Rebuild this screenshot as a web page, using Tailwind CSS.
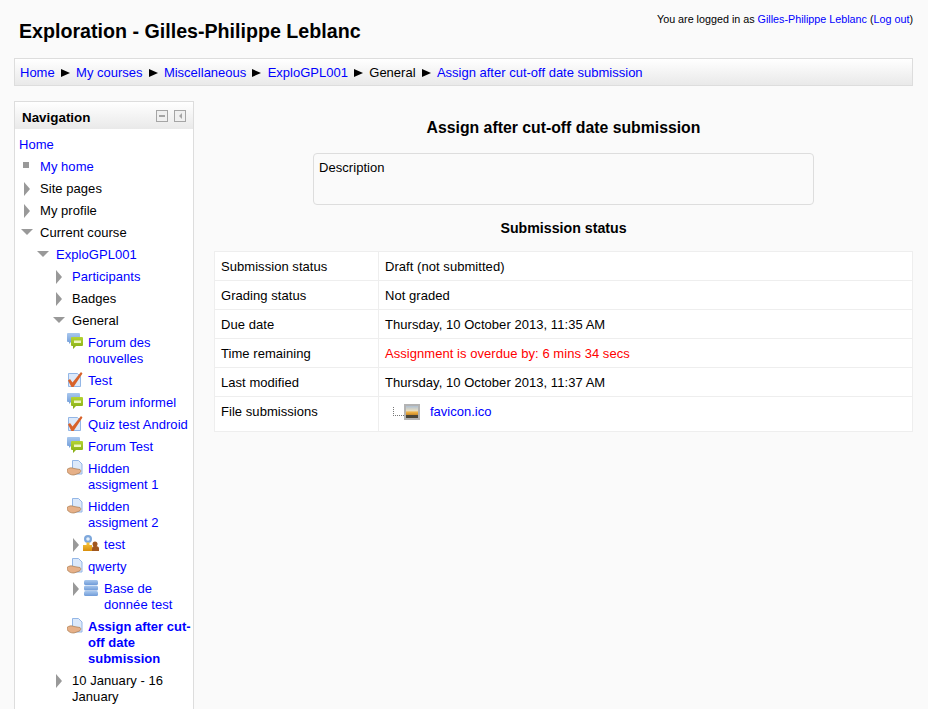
<!DOCTYPE html>
<html lang="en">
<head>
  <meta charset="UTF-8">
  <title>Assign after cut-off date submission</title>
  <script src="https://cdn.jsdelivr.net/npm/@tailwindcss/browser@4"></script>
</head>
<body class="bg-[#fafafa] text-black font-['Liberation_Sans',Arial,sans-serif] text-[13px] leading-[16px] tracking-[0.05px] h-[709px] overflow-hidden">
  <svg class="absolute w-0 h-0">
    <defs>
      <linearGradient id="blue" x1="0" y1="0" x2="0" y2="1"><stop offset="0" stop-color="#a9c8ee"/><stop offset="1" stop-color="#6f9bd8"/></linearGradient>
      <linearGradient id="green" x1="0" y1="0" x2="0" y2="1"><stop offset="0" stop-color="#b5d433"/><stop offset="1" stop-color="#83ab12"/></linearGradient>
      <linearGradient id="gold" x1="0" y1="0" x2="0" y2="1"><stop offset="0" stop-color="#f9c840"/><stop offset="1" stop-color="#d98e0a"/></linearGradient>
      <linearGradient id="sky" x1="0" y1="0" x2="0" y2="1"><stop offset="0" stop-color="#aebfd2"/><stop offset=".5" stop-color="#e6dcc0"/><stop offset=".7" stop-color="#eeb043"/><stop offset="1" stop-color="#c98a2a"/></linearGradient>
    </defs>
    <symbol id="right" viewBox="0 0 8 16"><path d="M1 1l6 7-6 7z" fill="#999"/></symbol>
    <symbol id="down" viewBox="0 0 12 8"><path d="M0 1h12L6 7z" fill="#999"/></symbol>
    <symbol id="bar" viewBox="0 0 9 8"><path d="M0 0l9 4-9 4z" fill="#000"/></symbol>
    <symbol id="forum" viewBox="0 0 16 16">
      <path d="M0 1a1 1 0 0 1 1-1h11a1 1 0 0 1 1 1v8H4l-2 2V9H1a1 1 0 0 1-1-1z" fill="url(#blue)"/>
      <path d="M4 5a1 1 0 0 1 1-1h10a1 1 0 0 1 1 1v7a1 1 0 0 1-1 1H9l-3 3v-3H5a1 1 0 0 1-1-1z" fill="url(#green)"/>
      <path d="M7 7.500h7v2.500H7z" fill="#eef6c0"/>
    </symbol>
    <symbol id="quiz" viewBox="0 0 16 16">
      <path d="M1.500 1.500h9l3 3v10h-12z" fill="#dce9fa" stroke="#93b6e6"/>
      <path d="M1 8.500l2-1.500 2.500 3.500L14 0l1.500 1.500L6.500 15H4.500z" fill="#d8622a"/>
    </symbol>
    <symbol id="assign" viewBox="0 0 16 16">
      <path d="M5.500 .5h6l3.500 3.500v10H5.500z" fill="#dce9fa" stroke="#93b6e6"/>
      <path d="M0 9.500c2-2 5-2 7-1l6 1c1.500 1 .5 3.500-1 3.700L7 15c-3 .3-6-1.500-7-3.500z" fill="#e6b088" stroke="#a97b4f" stroke-width=".7"/>
    </symbol>
    <symbol id="group" viewBox="0 0 16 16">
      <circle cx="5" cy="4" r="4" fill="#7da7db"/><circle cx="5" cy="4" r="1.800" fill="#e6f0fb"/>
      <path d="M3.500 7.500h3V10H9v6H0v-6h3.500z" fill="url(#gold)"/>
      <circle cx="12" cy="9" r="2.500" fill="#a0561f"/>
      <path d="M9 16v-2.500c0-2 1.500-2.500 3-2.500s4 .5 4 2.500V16z" fill="#a0561f"/>
    </symbol>
    <symbol id="db" viewBox="0 0 16 16">
      <rect x="1" y="0" width="14" height="5" rx="1.500" fill="url(#blue)"/>
      <rect x="1" y="5.500" width="14" height="5" rx="1.500" fill="url(#blue)"/>
      <rect x="1" y="11" width="14" height="5" rx="1.500" fill="url(#blue)"/>
    </symbol>
  </svg>

  <header class="flex justify-between h-[58px] pl-[19px] pr-[15px]">
    <h1 class="text-[19.65px] tracking-normal leading-[24px] font-bold pt-[19px]">Exploration - Gilles-Philippe Leblanc</h1>
    <div class="text-[10.75px] tracking-normal leading-[12px] pt-[13px]">You are logged in as <a class="text-[#0000ff]">Gilles-Philippe Leblanc</a> (<a class="text-[#0000ff]">Log out</a>)</div>
  </header>

  <nav class="ml-[14px] mr-[15px] h-[28px] pt-[1px] tracking-normal border border-[#dddddd] bg-linear-to-b from-white to-[#e9e9e9] flex items-center pl-[5px] gap-[6.2px]">
    <a class="text-[#0000ff]">Home</a><svg class="w-[9px] h-[8px]"><use href="#bar"/></svg>
    <a class="text-[#0000ff]">My courses</a><svg class="w-[9px] h-[8px]"><use href="#bar"/></svg>
    <a class="text-[#0000ff]">Miscellaneous</a><svg class="w-[9px] h-[8px]"><use href="#bar"/></svg>
    <a class="text-[#0000ff]">ExploGPL001</a><svg class="w-[9px] h-[8px]"><use href="#bar"/></svg>
    <span>General</span><svg class="w-[9px] h-[8px]"><use href="#bar"/></svg>
    <a class="text-[#0000ff]">Assign after cut-off date submission</a>
  </nav>

  <div class="flex mt-[15px] pl-[14px] pr-[15px] gap-[20px]">
    <aside class="w-[180px] shrink-0 border border-[#dddddd] bg-white h-[700px]">
      <div class="h-[27px] bg-linear-to-b from-white to-[#e9e9e9] flex items-center justify-between pl-[7px] pr-[7px]">
        <h2 class="font-bold text-[13.4px] tracking-normal pt-[4px]">Navigation</h2>
        <div class="flex gap-[6px] pt-[1px]">
          <svg width="12" height="12" viewBox="0 0 12 12"><rect x=".5" y=".5" width="11" height="11" fill="#f0f0f0" stroke="#a5a5a5"/><path d="M3 5h6v2H3z" fill="#a5a5a5"/></svg>
          <svg width="12" height="12" viewBox="0 0 12 12"><rect x=".5" y=".5" width="11" height="11" fill="#f0f0f0" stroke="#a5a5a5"/><path d="M8 3v6L5 6z" fill="#a5a5a5"/></svg>
        </div>
      </div>
      <ul class="pl-[4px] pr-[1px] pt-[5px]">
        <li class="py-[3px]"><a class="text-[#0000ff]">Home</a></li>
        <li class="py-[3px] pl-[21px] relative"><span class="absolute left-[4px] top-[6px] size-[6px] bg-[#999999]"></span><a class="text-[#0000ff]">My home</a></li>
        <li class="py-[3px] pl-[21px] relative"><svg class="absolute left-[4px] top-[3px] w-[8px] h-[16px]"><use href="#right"/></svg>Site pages</li>
        <li class="py-[3px] pl-[21px] relative"><svg class="absolute left-[4px] top-[3px] w-[8px] h-[16px]"><use href="#right"/></svg>My profile</li>
        <li class="py-[3px] pl-[21px] relative"><svg class="absolute left-[2px] top-[6px] w-[12px] h-[8px]"><use href="#down"/></svg>Current course</li>
        <li class="py-[3px] pl-[37px] relative"><svg class="absolute left-[18px] top-[6px] w-[12px] h-[8px]"><use href="#down"/></svg><a class="text-[#0000ff]">ExploGPL001</a></li>
        <li class="py-[3px] pl-[53px] relative"><svg class="absolute left-[36px] top-[3px] w-[8px] h-[16px]"><use href="#right"/></svg><a class="text-[#0000ff]">Participants</a></li>
        <li class="py-[3px] pl-[53px] relative"><svg class="absolute left-[36px] top-[3px] w-[8px] h-[16px]"><use href="#right"/></svg>Badges</li>
        <li class="py-[3px] pl-[53px] relative"><svg class="absolute left-[34px] top-[6px] w-[12px] h-[8px]"><use href="#down"/></svg>General</li>
        <li class="py-[3px] pl-[69px] relative"><svg class="absolute left-[48px] top-[1px] size-[16px]"><use href="#forum"/></svg><a class="text-[#0000ff]">Forum des nouvelles</a></li>
        <li class="py-[3px] pl-[69px] relative"><svg class="absolute left-[48px] top-[2px] size-[16px]"><use href="#quiz"/></svg><a class="text-[#0000ff]">Test</a></li>
        <li class="py-[3px] pl-[69px] relative"><svg class="absolute left-[48px] top-[1px] size-[16px]"><use href="#forum"/></svg><a class="text-[#0000ff]">Forum informel</a></li>
        <li class="py-[3px] pl-[69px] relative"><svg class="absolute left-[48px] top-[2px] size-[16px]"><use href="#quiz"/></svg><a class="text-[#0000ff]">Quiz test Android</a></li>
        <li class="py-[3px] pl-[69px] relative"><svg class="absolute left-[48px] top-[1px] size-[16px]"><use href="#forum"/></svg><a class="text-[#0000ff]">Forum Test</a></li>
        <li class="py-[3px] pl-[69px] pr-[20px] relative"><svg class="absolute left-[48px] top-[2px] size-[16px]"><use href="#assign"/></svg><a class="text-[#0000ff]">Hidden assigment 1</a></li>
        <li class="py-[3px] pl-[69px] pr-[20px] relative"><svg class="absolute left-[48px] top-[2px] size-[16px]"><use href="#assign"/></svg><a class="text-[#0000ff]">Hidden assigment 2</a></li>
        <li class="py-[3px] pl-[85px] relative"><svg class="absolute left-[53px] top-[3px] w-[8px] h-[16px]"><use href="#right"/></svg><svg class="absolute left-[64px] top-[1px] size-[16px]"><use href="#group"/></svg><a class="text-[#0000ff]">test</a></li>
        <li class="py-[3px] pl-[69px] relative"><svg class="absolute left-[48px] top-[2px] size-[16px]"><use href="#assign"/></svg><a class="text-[#0000ff]">qwerty</a></li>
        <li class="py-[3px] pl-[85px] pr-[2px] relative"><svg class="absolute left-[53px] top-[3px] w-[8px] h-[16px]"><use href="#right"/></svg><svg class="absolute left-[64px] top-[2px] size-[16px]"><use href="#db"/></svg><a class="text-[#0000ff]">Base de donnée test</a></li>
        <li class="py-[3px] pl-[69px] relative"><svg class="absolute left-[48px] top-[2px] size-[16px]"><use href="#assign"/></svg><a class="text-[#0000ff] font-bold tracking-normal">Assign after cut-off date submission</a></li>
        <li class="py-[3px] pl-[53px] pr-[2px] relative"><svg class="absolute left-[36px] top-[3px] w-[8px] h-[16px]"><use href="#right"/></svg>10 January - 16 January</li>
      </ul>
    </aside>

    <main class="flex-1 min-w-0">
      <h2 class="text-center text-[15.8px] tracking-normal leading-[20px] font-bold mt-[17px]">Assign after cut-off date submission</h2>
      <div class="mx-auto mt-[15px] w-[501px] h-[52px] border border-[#dddddd] rounded-[4px] px-[5px] py-[6px]">Description</div>
      <h3 class="text-center text-[14.2px] tracking-normal leading-[16px] font-bold mt-[15px]">Submission status</h3>
      <table class="mt-[15px] w-full border-collapse bg-white">
        <tbody>
          <tr class="h-[29px]"><td class="border border-[#eeeeee] px-[6px] pt-[2px] w-[164px]">Submission status</td><td class="border border-[#eeeeee] px-[6px] pt-[2px]">Draft (not submitted)</td></tr>
          <tr class="h-[29px]"><td class="border border-[#eeeeee] px-[6px] pt-[2px]">Grading status</td><td class="border border-[#eeeeee] px-[6px] pt-[2px]">Not graded</td></tr>
          <tr class="h-[29px]"><td class="border border-[#eeeeee] px-[6px] pt-[2px]">Due date</td><td class="border border-[#eeeeee] px-[6px] pt-[2px]">Thursday, 10 October 2013, 11:35 AM</td></tr>
          <tr class="h-[29px]"><td class="border border-[#eeeeee] px-[6px] pt-[2px]">Time remaining</td><td class="border border-[#eeeeee] px-[6px] pt-[2px] text-[#ff0000]">Assignment is overdue by: 6 mins 34 secs</td></tr>
          <tr class="h-[29px]"><td class="border border-[#eeeeee] px-[6px] pt-[2px]">Last modified</td><td class="border border-[#eeeeee] px-[6px] pt-[2px]">Thursday, 10 October 2013, 11:37 AM</td></tr>
          <tr class="h-[35px]">
            <td class="border border-[#eeeeee] px-[6px] align-top pt-[7px]">File submissions</td>
            <td class="border border-[#eeeeee] px-[6px] align-top pt-[7px]">
              <div class="flex items-center pl-[8px]">
                <span class="w-[11px] h-[9px] mb-[1px] border-l border-b border-dotted border-[#777777]"></span>
                <svg width="16" height="16" viewBox="0 0 16 16" class="shrink-0">
                  <rect width="16" height="16" fill="#b3b3b3"/>
                  <rect x="2" y="2" width="12" height="9" fill="url(#sky)"/>
                  <rect x="2" y="11" width="12" height="3" fill="#4a4538"/>
                </svg>
                <a class="text-[#0000ff] ml-[10px] tracking-normal">favicon.ico</a>
              </div>
            </td>
          </tr>
        </tbody>
      </table>
    </main>
  </div>
</body>
</html>
